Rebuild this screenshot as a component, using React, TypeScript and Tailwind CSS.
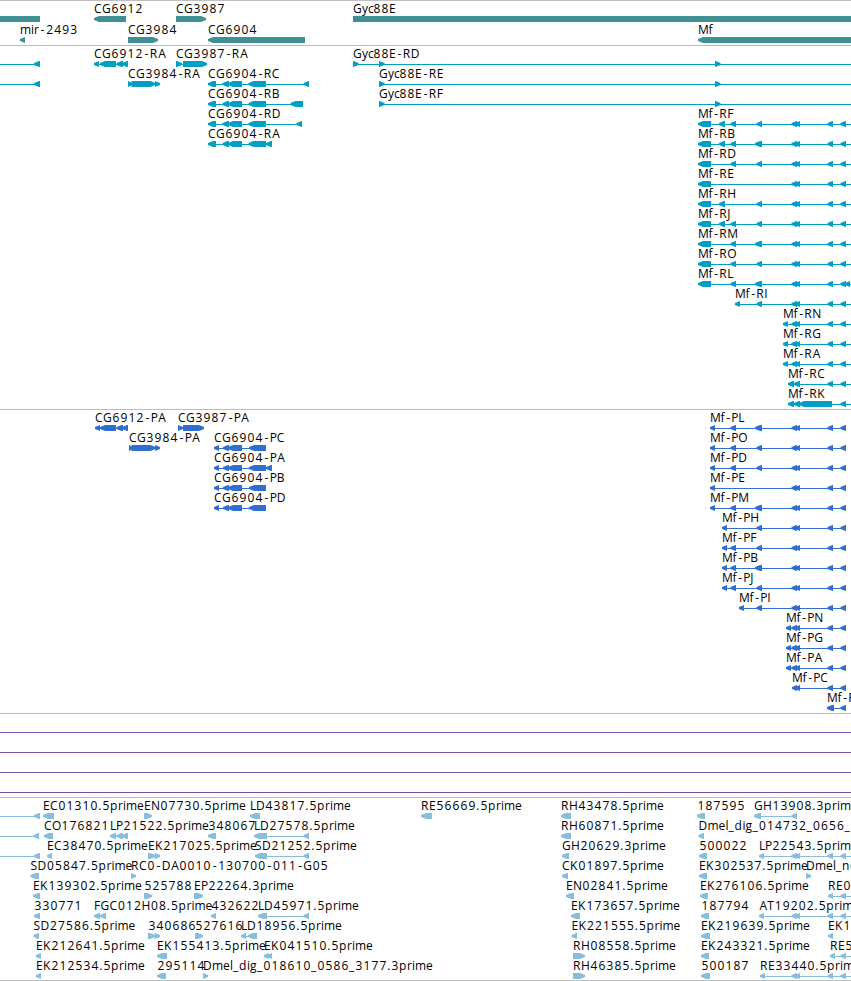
type Span = [number, number];

type Feature = {
  row: number;
  label?: string;
  dir: -1 | 0 | 1;
  blocks: Span[];
  // set when the feature runs on past the edge of the view
  from?: number;
  to?: number;
};

const VIEW_WIDTH = 851;
const HEAD = 5;

// pen advance of each character in the label face, in px
const ADVANCE: Record<string, number> = {
  A: 8.3, C: 8, D: 9, E: 7, F: 6.5, G: 9, H: 9, I: 3, J: 4, K: 8, L: 6, M: 10.6, N: 9, O: 9, P: 7, R: 8, S: 7, T: 7,
  c: 5, d: 8, e: 7, f: 4, g: 7, i: 3, l: 3, m: 11, n: 8, p: 8, r: 5, y: 6, ".": 4, "-": 6.75, _: 6,
};

const NUDGE: Record<string, number> = { "-": 1.6, A: 0.5, ".": 0.3 };

const labelPositions = (label: string, start: number) => {
  let pen = start;
  return label
    .split("")
    .map((ch) => {
      const isDigit = ch >= "0" && ch <= "9";
      const x = pen + (isDigit ? 0.5 : NUDGE[ch] ?? 0);
      pen += isDigit ? 8 : ADVANCE[ch] ?? 7;
      return x.toFixed(2);
    })
    .join(" ");
};

const blockPoints = ([a, b]: Span, dir: number, mid: number) => {
  const top = mid - 3;
  const bottom = mid + 3;
  const head = Math.min(HEAD, b - a);
  // the tip is blunt, 2px tall
  if (dir < 0) {
    return `${a},${mid - 1} ${a + head},${top} ${b},${top} ${b},${bottom} ${a + head},${bottom} ${a},${mid + 1}`;
  }
  if (dir > 0) {
    return `${b},${mid - 1} ${b - head},${top} ${a},${top} ${a},${bottom} ${b - head},${bottom} ${b},${mid + 1}`;
  }
  return `${a},${top} ${b},${top} ${b},${bottom} ${a},${bottom}`;
};

const genes: Feature[] = [
  { row: 0, dir: 0, blocks: [[0, 40]] },
  { row: 0, label: "CG6912", dir: -1, blocks: [[94, 126]] },
  { row: 0, label: "CG3987", dir: 1, blocks: [[176, 206]] },
  { row: 0, label: "Gyc88E", dir: 0, blocks: [[353, 851]] },
  { row: 1, label: "mir-2493", dir: -1, blocks: [[20, 25]] },
  { row: 1, label: "CG3984", dir: 1, blocks: [[128, 158]] },
  { row: 1, label: "CG6904", dir: -1, blocks: [[208, 305]] },
  { row: 1, label: "Mf", dir: -1, blocks: [[698, 851]] },
];

// exons shared between the Mf isoforms
const M719: Span = [719, 725];
const M730: Span = [730.5, 736];
const M755: Span = [755, 762];
const M756: Span = [756.5, 762];
const PAIR: Span[] = [[791.5, 797], [795, 800]];
const TAIL: Span[] = [[827.5, 833], [840.5, 846]];

const mfTranscript = (row: number, label: string, blocks: Span[], tail: Span[] = [...PAIR, ...TAIL]): Feature => ({
  row,
  label,
  dir: -1,
  blocks: [...blocks, ...tail],
  to: VIEW_WIDTH,
});

const mfProtein = (row: number, label: string, blocks: Span[], tail: Span[] = [...PAIR, ...TAIL]): Feature => ({
  row,
  label,
  dir: -1,
  blocks: [...blocks, ...tail],
});

const CG6904_CORE: Span[] = [[208, 216], [222.5, 229], [228, 242], [248.5, 266]];
const CG6904_CDS: Span[] = [[214, 219], [223, 229], [228, 242], [249, 266]];

const transcripts: Feature[] = [
  { row: 0, dir: -1, blocks: [[34, 40]], from: 0 },
  { row: 1, dir: -1, blocks: [[34, 40]], from: 0 },
  { row: 0, label: "CG6912-RA", dir: -1, blocks: [[94, 99], [100, 116], [116.5, 123], [122, 128]] },
  { row: 0, label: "CG3987-RA", dir: 1, blocks: [[176, 182], [183, 207]] },
  { row: 0, label: "Gyc88E-RD", dir: 1, blocks: [[353, 358.5], [379, 384.5], [715, 720.5]], to: VIEW_WIDTH },
  { row: 1, label: "CG3984-RA", dir: 1, blocks: [[128, 132], [131.5, 155.5], [155, 160]] },
  { row: 1, label: "CG6904-RC", dir: -1, blocks: [...CG6904_CORE, [303.5, 309]] },
  { row: 1, label: "Gyc88E-RE", dir: 1, blocks: [[379, 384.5], [715, 720.5]], to: VIEW_WIDTH },
  { row: 2, label: "CG6904-RB", dir: -1, blocks: [...CG6904_CORE, [290.5, 303]] },
  { row: 2, label: "Gyc88E-RF", dir: 1, blocks: [[379, 384.5], [715, 720.5]], to: VIEW_WIDTH },
  { row: 3, label: "CG6904-RD", dir: -1, blocks: [...CG6904_CORE, [296.5, 302]] },
  { row: 4, label: "CG6904-RA", dir: -1, blocks: [...CG6904_CORE, [266, 272]] },
  mfTranscript(3, "Mf-RF", [[698, 711], M719, M730, M756]),
  mfTranscript(4, "Mf-RB", [[698, 711], M719, M730, M755]),
  mfTranscript(5, "Mf-RD", [[698, 711], M730, M756]),
  mfTranscript(6, "Mf-RE", [[698, 711]]),
  mfTranscript(7, "Mf-RH", [[698, 711], M719, M756]),
  mfTranscript(8, "Mf-RJ", [[698, 711], M719, M730, M756]),
  mfTranscript(9, "Mf-RM", [[698, 711], M730, M755]),
  mfTranscript(10, "Mf-RO", [[698, 711], M730, M756]),
  mfTranscript(11, "Mf-RL", [[698, 711], M730, M755], [...PAIR, ...TAIL, [845, 850]]),
  mfTranscript(12, "Mf-RI", [[735, 740], M756]),
  mfTranscript(13, "Mf-RN", [[783, 788]]),
  mfTranscript(14, "Mf-RG", [[783, 788]]),
  mfTranscript(15, "Mf-RA", [[783, 788]]),
  mfTranscript(16, "Mf-RC", [[788, 794], [794, 800]], TAIL),
  mfTranscript(17, "Mf-RK", [[788, 794], [794, 800], [799, 832]], [[840.5, 846]]),
];

const proteins: Feature[] = [
  { row: 0, label: "CG6912-PA", dir: -1, blocks: [[95, 100], [100, 116], [116.5, 123], [122, 128]] },
  { row: 0, label: "CG3987-PA", dir: 1, blocks: [[178, 183], [183, 204]] },
  { row: 1, label: "CG3984-PA", dir: 1, blocks: [[129, 133], [131.5, 155.5], [155, 160]] },
  { row: 1, label: "CG6904-PC", dir: -1, blocks: CG6904_CDS },
  { row: 2, label: "CG6904-PA", dir: -1, blocks: [...CG6904_CDS, [266, 272]] },
  { row: 3, label: "CG6904-PB", dir: -1, blocks: CG6904_CDS },
  { row: 4, label: "CG6904-PD", dir: -1, blocks: CG6904_CDS },
  mfProtein(0, "Mf-PL", [[710, 715], M730, M755]),
  mfProtein(1, "Mf-PO", [[710, 715], M730, M756]),
  mfProtein(2, "Mf-PD", [[710, 715], M730, M756]),
  mfProtein(3, "Mf-PE", [[710, 715]]),
  mfProtein(4, "Mf-PM", [[710, 715], M730, M755]),
  mfProtein(5, "Mf-PH", [[722, 727], M756]),
  mfProtein(6, "Mf-PF", [[722, 727], M730, M756]),
  mfProtein(7, "Mf-PB", [[722, 727], M730, M755]),
  mfProtein(8, "Mf-PJ", [[722, 727], M730, M756]),
  mfProtein(9, "Mf-PI", [[739, 744], M756]),
  mfProtein(10, "Mf-PN", [[786, 791]]),
  mfProtein(11, "Mf-PG", [[786, 791]]),
  mfProtein(12, "Mf-PA", [[786, 791]]),
  mfProtein(13, "Mf-PC", [[792, 797], [795, 800]], TAIL),
  mfProtein(14, "Mf-PK", [[827, 834]], [[840.5, 846]]),
];

const ests: Feature[] = [
  { row: 0, dir: -1, blocks: [[34, 40]], from: 0 },
  { row: 0, label: "EC01310.5prime", dir: -1, blocks: [[43, 54]] },
  { row: 0, label: "EN07730.5prime", dir: 1, blocks: [[144, 152]] },
  { row: 0, label: "LD43817.5prime", dir: -1, blocks: [[250, 260]] },
  { row: 0, label: "RE56669.5prime", dir: -1, blocks: [[421, 432]] },
  { row: 0, label: "RH43478.5prime", dir: -1, blocks: [[561, 571]] },
  { row: 0, label: "187595", dir: -1, blocks: [[697, 705]] },
  { row: 0, label: "GH13908.3prime", dir: -1, blocks: [[754, 761], [791.5, 797]] },
  { row: 1, dir: -1, blocks: [[33.5, 39]], from: 0 },
  { row: 1, label: "CO176821", dir: -1, blocks: [[44, 53]] },
  { row: 1, label: "LP21522.5prime", dir: -1, blocks: [[110, 116], [116.5, 123], [122, 128]] },
  { row: 1, label: "348067", dir: -1, blocks: [[208, 216]] },
  { row: 1, label: "LD27578.5prime", dir: -1, blocks: [[254, 267], [303.5, 309]] },
  { row: 1, label: "RH60871.5prime", dir: -1, blocks: [[561, 571]] },
  { row: 1, label: "Dmel_dig_014732_0656_3177", dir: -1, blocks: [[698.5, 704]] },
  { row: 2, dir: -1, blocks: [[34, 40]], from: 0 },
  { row: 2, label: "EC38470.5prime", dir: -1, blocks: [[47, 52]] },
  { row: 2, label: "EK217025.5prime", dir: 1, blocks: [[148, 155], [154.5, 160]] },
  { row: 2, label: "SD21252.5prime", dir: -1, blocks: [[255, 267], [303.5, 309]] },
  { row: 2, label: "GH20629.3prime", dir: -1, blocks: [[562, 569]] },
  { row: 2, label: "500022", dir: -1, blocks: [[699, 707]] },
  { row: 2, label: "LP22543.5prime", dir: -1, blocks: [[759, 764], ...PAIR, ...TAIL], to: VIEW_WIDTH },
  { row: 3, label: "SD05847.5prime", dir: -1, blocks: [[30.5, 39]] },
  { row: 3, label: "RC0-DA0010-130700-011-G05", dir: 1, blocks: [[131, 136]] },
  { row: 3, label: "CK01897.5prime", dir: -1, blocks: [[562, 568]] },
  { row: 3, label: "EK302537.5prime", dir: -1, blocks: [[699, 707]] },
  { row: 3, label: "Dmel_ne", dir: 1, blocks: [[806, 811]] },
  { row: 4, label: "EK139302.5prime", dir: -1, blocks: [[33, 40]] },
  { row: 4, label: "525788", dir: 1, blocks: [[144, 152]] },
  { row: 4, label: "EP22264.3prime", dir: 1, blocks: [[194, 203]] },
  { row: 4, label: "EN02841.5prime", dir: -1, blocks: [[566, 574]] },
  { row: 4, label: "EK276106.5prime", dir: -1, blocks: [[700, 708]] },
  { row: 4, label: "RE0", dir: -1, blocks: [[828, 833], [840.5, 846]], to: VIEW_WIDTH },
  { row: 5, label: "330771", dir: -1, blocks: [[34, 40]] },
  { row: 5, label: "FGC012H08.5prime", dir: -1, blocks: [[94, 100], [100, 106]] },
  { row: 5, label: "432622", dir: -1, blocks: [[211, 216]] },
  { row: 5, label: "LD45971.5prime", dir: -1, blocks: [[258, 267], [303.5, 309]] },
  { row: 5, label: "EK173657.5prime", dir: -1, blocks: [[571, 580]] },
  { row: 5, label: "187794", dir: -1, blocks: [[701, 709]] },
  { row: 5, label: "AT19202.5prime", dir: -1, blocks: [[759, 764], ...PAIR, ...TAIL], to: VIEW_WIDTH },
  { row: 6, label: "SD27586.5prime", dir: -1, blocks: [[33.5, 39]] },
  { row: 6, label: "340686", dir: 1, blocks: [[148, 155], [154.5, 160]] },
  { row: 6, label: "527616", dir: 1, blocks: [[195, 203]] },
  { row: 6, label: "LD18956.5prime", dir: -1, blocks: [[241, 246], [248, 257]] },
  { row: 6, label: "EK221555.5prime", dir: -1, blocks: [[571.5, 577]] },
  { row: 6, label: "EK219639.5prime", dir: -1, blocks: [[701, 710]] },
  { row: 6, label: "EK1", dir: -1, blocks: [[828, 833]] },
  { row: 7, label: "EK212641.5prime", dir: -1, blocks: [[36, 41]] },
  { row: 7, label: "EK155413.5prime", dir: -1, blocks: [[157, 167]] },
  { row: 7, label: "EK041510.5prime", dir: -1, blocks: [[264, 269], [267, 272]] },
  { row: 7, label: "RH08558.5prime", dir: 1, blocks: [[573, 585]] },
  { row: 7, label: "EK243321.5prime", dir: -1, blocks: [[701, 709]] },
  { row: 7, label: "RE5", dir: -1, blocks: [[830, 835], [840.5, 846]], to: VIEW_WIDTH },
  { row: 8, label: "EK212534.5prime", dir: -1, blocks: [[36, 41]] },
  { row: 8, label: "295114", dir: -1, blocks: [[157, 166]] },
  { row: 8, label: "Dmel_dig_018610_0586_3177.3prime", dir: 1, blocks: [[203, 208]] },
  { row: 8, label: "RH46385.5prime", dir: 1, blocks: [[573, 585]] },
  { row: 8, label: "500187", dir: -1, blocks: [[701, 710]] },
  { row: 8, label: "RE33440.5prime", dir: -1, blocks: [[760, 765], ...PAIR, ...TAIL], to: VIEW_WIDTH },
];

const FeatureGlyph = ({ feature, pitch }: { feature: Feature; pitch: number }) => {
  const { row, label, dir, blocks } = feature;
  const top = row * pitch;
  const mid = top + 18;
  const start = feature.from ?? blocks[0][0];
  const end = feature.to ?? blocks[blocks.length - 1][1];
  const hasLine = dir !== 0 && (blocks.length > 1 || feature.from !== undefined);

  return (
    <g>
      {hasLine && <rect x={start} y={mid} width={end - start} height={1} shapeRendering="crispEdges" />}
      {blocks.map((block) => (
        <polygon key={block[0]} points={blockPoints(block, dir, mid)} />
      ))}
      {label && (
        <text x={labelPositions(label, blocks[0][0])} y={top + 12} className="fill-black">
          {label}
        </text>
      )}
    </g>
  );
};

const Track = ({ features, pitch = 20, className }: { features: Feature[]; pitch?: number; className: string }) => (
  <section className={`w-full shrink-0 overflow-hidden border-t border-[#bebebe] ${className}`}>
    <svg className="block h-full w-[851px] font-['Open_Sans','Noto_Sans',sans-serif] text-[12px]">
      {features.map((feature, i) => (
        <FeatureGlyph key={i} feature={feature} pitch={pitch} />
      ))}
    </svg>
  </section>
);

const App = () => {
  return (
    <main className="flex h-[981px] w-[851px] flex-col overflow-hidden bg-white">
      <Track features={genes} pitch={21} className="h-[45px] fill-[#408f95]" />
      <Track features={transcripts} className="h-[364px] fill-[#009fc3]" />
      <Track features={proteins} className="h-[304px] fill-[#316ed0]" />

      <section className="flex h-[84px] shrink-0 flex-col gap-[19px] border-t border-[#bebebe] pt-[18px]">
        {[0, 1, 2, 3].map((n) => (
          <div key={n} className="h-px shrink-0 bg-[#7454ab]" />
        ))}
      </section>

      <Track features={ests} className="h-[183px] fill-[#87bddf]" />
      <div className="h-px shrink-0 bg-[#bebebe]" />
    </main>
  );
};

export default App;
